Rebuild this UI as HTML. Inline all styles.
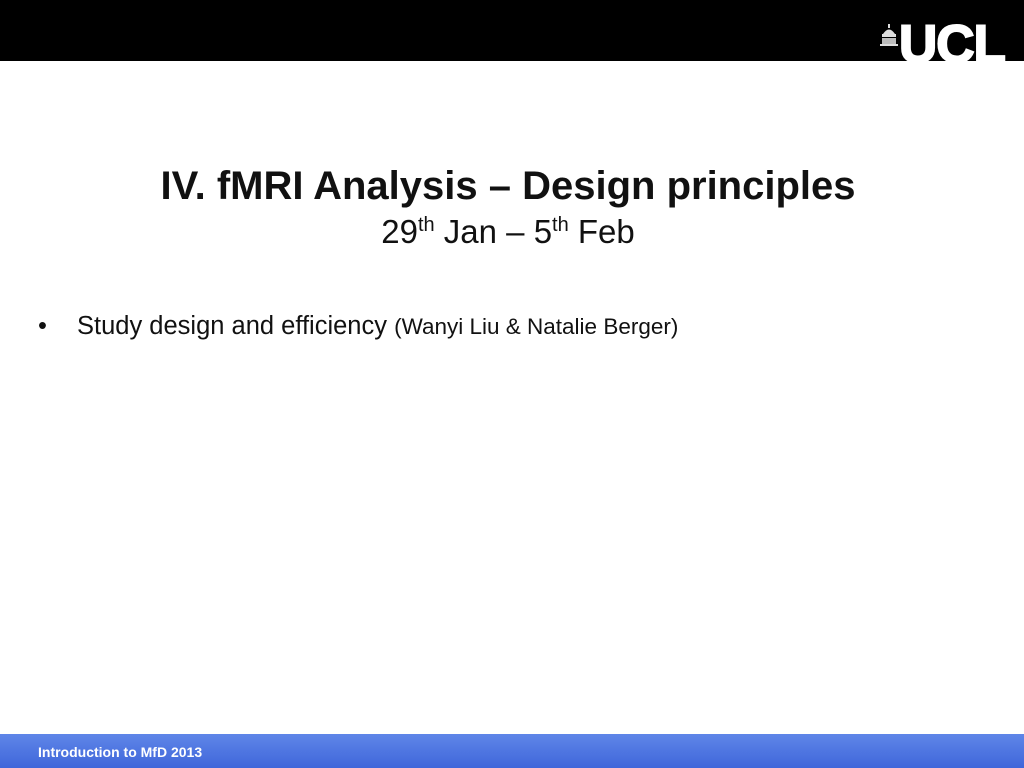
<!DOCTYPE html>
<html><head><style>
body{margin:0;width:1024px;height:768px;background:#fff;position:relative;overflow:hidden;font-family:"Liberation Sans",Arial,sans-serif}
#top{position:absolute;left:0;top:0;width:1024px;height:61px;background:#000;overflow:hidden}
#ucl{position:absolute;left:899px;top:18px;font-weight:bold;font-size:53px;color:#fff;letter-spacing:-1px;line-height:1;-webkit-text-stroke:2px #fff}
#foot{position:absolute;left:0;top:734px;width:1024px;height:34px;background:linear-gradient(#5f86e8,#3f66da)}
#foot span{position:absolute;left:38px;top:10px;color:#fff;font-weight:bold;font-size:14px}
h1{position:absolute;left:0;width:1016px;text-align:center;top:164px;margin:0;font-size:40px;font-weight:bold;color:#111}
.d{position:absolute;left:0;width:1016px;text-align:center;top:213px;font-size:33px;color:#111}
sup{font-size:20px;vertical-align:12px;line-height:0}
.b{position:absolute;left:38px;top:312px;font-size:25.5px;color:#111}
.b .t{position:absolute;left:39px;white-space:nowrap}
.b small{font-size:22.5px}
</style></head><body>
<div id="top"><div id="ucl">UCL</div></div>
<svg style="position:absolute;left:880px;top:24px" width="18" height="22" viewBox="0 0 18 22">
<rect x="8" y="0" width="2" height="4" fill="#ddd"/>
<path d="M3 10 Q9 1 15 10Z" fill="#ddd"/>
<rect x="2" y="10" width="14" height="3" fill="#ddd"/>
<rect x="2" y="14" width="14" height="6" fill="#bbb"/>
<rect x="0" y="20" width="18" height="2" fill="#ddd"/>
</svg>
<h1>IV. fMRI Analysis – Design principles</h1>
<div class="d">29<sup>th</sup> Jan – 5<sup>th</sup> Feb</div>
<div class="b">•<span class="t">Study design and efficiency <small>(Wanyi Liu &amp; Natalie Berger)</small></span></div>
<div id="foot"><span>Introduction to MfD 2013</span></div>
</body></html>
